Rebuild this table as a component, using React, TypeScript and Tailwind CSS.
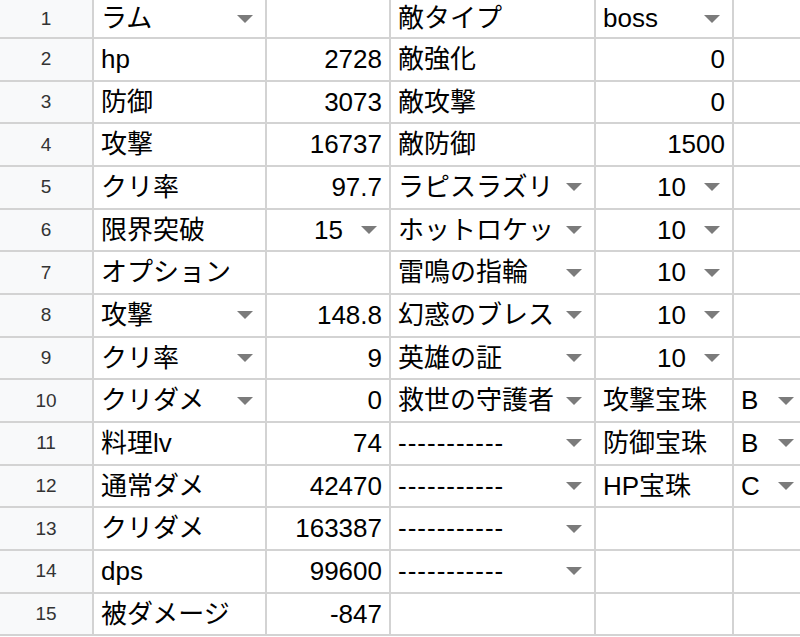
import React from 'react';

type Cell =
  | { t: 'text'; v: string }
  | { t: 'num'; v: string }
  | { t: 'dd'; v: string }
  | { t: 'ddnum'; v: string }
  | { t: 'empty' };

const T = (v: string): Cell => ({ t: 'text', v });
const N = (v: string): Cell => ({ t: 'num', v });
const D = (v: string): Cell => ({ t: 'dd', v });
const DN = (v: string): Cell => ({ t: 'ddnum', v });
const E: Cell = { t: 'empty' };

const DASH = '-----------';

// one row per spreadsheet row, columns B..F
const rows: Cell[][] = [
  [D('ラム'), E, T('敵タイプ'), D('boss'), E],
  [T('hp'), N('2728'), T('敵強化'), N('0'), E],
  [T('防御'), N('3073'), T('敵攻撃'), N('0'), E],
  [T('攻撃'), N('16737'), T('敵防御'), N('1500'), E],
  [T('クリ率'), N('97.7'), D('ラピスラズリ'), DN('10'), E],
  [T('限界突破'), DN('15'), D('ホットロケット'), DN('10'), E],
  [T('オプション'), E, D('雷鳴の指輪'), DN('10'), E],
  [D('攻撃'), N('148.8'), D('幻惑のブレス'), DN('10'), E],
  [D('クリ率'), N('9'), D('英雄の証'), DN('10'), E],
  [D('クリダメ'), N('0'), D('救世の守護者'), T('攻撃宝珠'), D('B')],
  [T('料理lv'), N('74'), D(DASH), T('防御宝珠'), D('B')],
  [T('通常ダメ'), N('42470'), D(DASH), T('HP宝珠'), D('C')],
  [T('クリダメ'), N('163387'), D(DASH), E, E],
  [T('dps'), N('99600'), D(DASH), E, E],
  [T('被ダメージ'), N('-847'), E, E, E],
];

const Caret = () => (
  <svg width="16" height="8" viewBox="0 0 16 8" className="shrink-0">
    <polygon points="0,0 16,0 8,8" fill="#7b7b7b" />
  </svg>
);

const CellView: React.FC<{ cell: Cell }> = ({ cell }) => {
  if (cell.t === 'empty') return <div className="bg-white" />;

  if (cell.t === 'text') {
    return (
      <div className="bg-white flex items-center pl-[7px] pr-[4px] overflow-hidden whitespace-nowrap">
        {cell.v}
      </div>
    );
  }

  if (cell.t === 'num') {
    return (
      <div className="bg-white flex items-center justify-end pr-[7px] overflow-hidden whitespace-nowrap">
        {cell.v}
      </div>
    );
  }

  if (cell.t === 'ddnum') {
    return (
      <div className="bg-white flex items-center pr-[12px] overflow-hidden whitespace-nowrap">
        <span className="flex-1 text-right">{cell.v}</span>
        <span className="ml-[18px] flex"><Caret /></span>
      </div>
    );
  }

  const dash = cell.v === DASH;
  return (
    <div className="bg-white flex items-center pl-[7px] pr-[12px] overflow-hidden whitespace-nowrap">
      <span className={dash ? 'flex-1 min-w-0 overflow-hidden tracking-[1px]' : 'flex-1 min-w-0 overflow-hidden'}>
        {cell.v}
      </span>
      <span className="ml-[10px] flex"><Caret /></span>
    </div>
  );
};

export default function App() {
  return (
    <div
      className="w-[800px] h-[637px] overflow-hidden bg-white text-black text-[26px] leading-[1.25]"
      style={{ fontFamily: '"Liberation Sans", "Noto Sans CJK JP", sans-serif' }}
    >
      <div className="w-[806px] grid grid-cols-[92px_171px_122px_203px_136px_72px] grid-rows-[37px_repeat(14,40.67px)] gap-[2px] pb-[2px] bg-[#d3d3d3]">
        {rows.map((row, i) => (
          <React.Fragment key={i}>
            <div className="bg-[#f8f9fa] flex items-center justify-center text-[19px] text-[#333]">
              {i + 1}
            </div>
            {row.map((cell, j) => (
              <CellView key={j} cell={cell} />
            ))}
          </React.Fragment>
        ))}
      </div>
    </div>
  );
}
